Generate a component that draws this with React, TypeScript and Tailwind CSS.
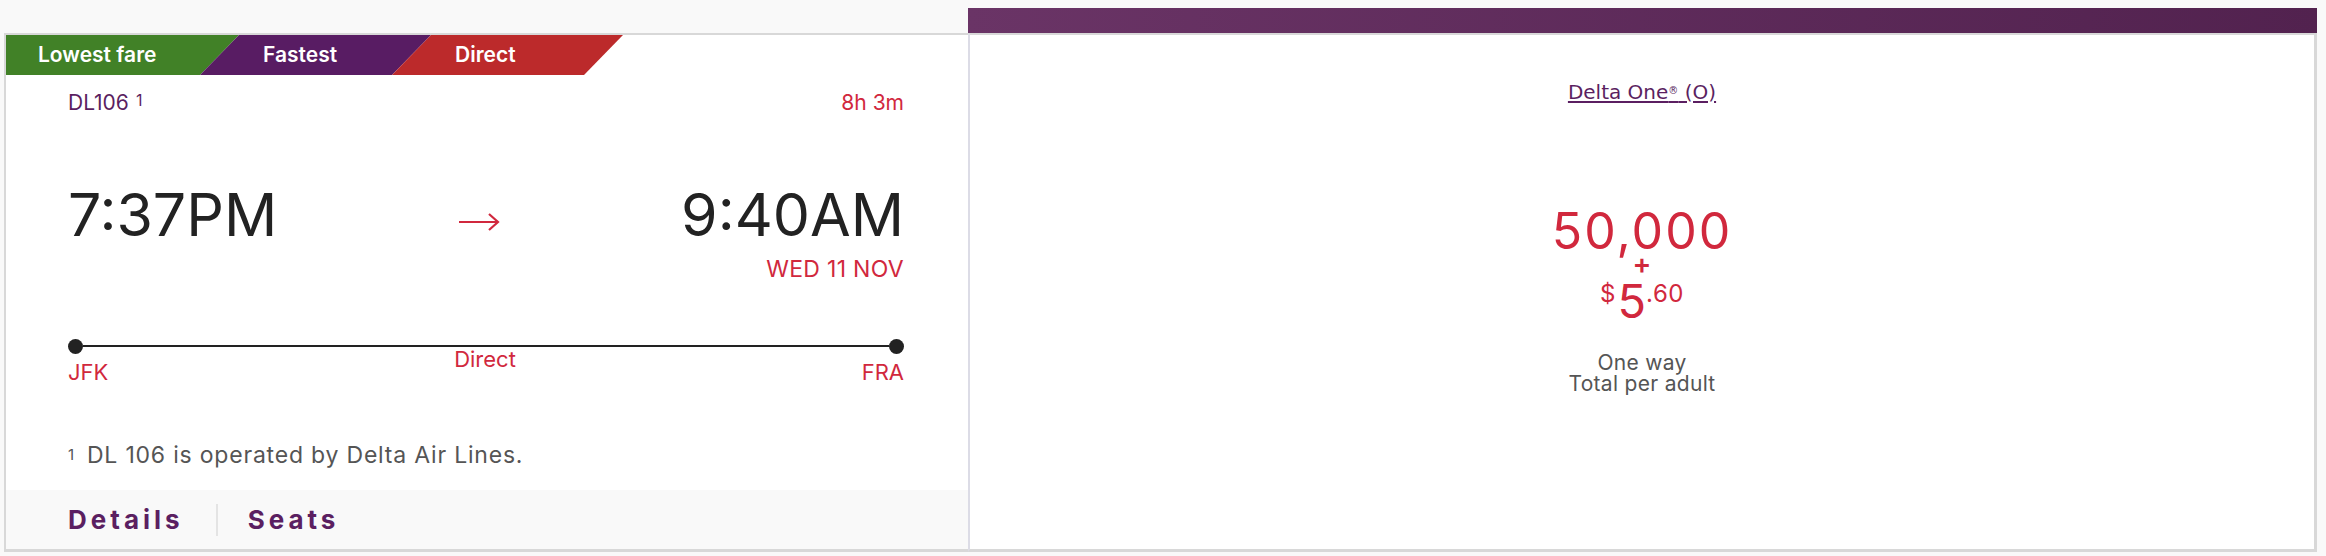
const Tag = ({ label, bg, first }: { label: string; bg: string; first?: boolean }) => (
  <div
    className={
      first
        ? `h-full w-[233px] pl-[32px] flex items-center text-white font-semibold text-[21px] ${bg} [clip-path:polygon(0_0,100%_0,calc(100%_-_39px)_100%,0_100%)]`
        : `h-full w-[231px] -ml-[39px] pl-[63px] flex items-center text-white font-semibold text-[21px] ${bg} [clip-path:polygon(39px_0,100%_0,calc(100%_-_39px)_100%,0_100%)]`
    }
  >
    {label}
  </div>
);

const FlightCard = () => (
  <div className="h-[519px] bg-white border-t-2 border-l-2 border-b-[3px] border-[#d8d8d8] flex flex-col">
    {/* badges */}
    <div className="flex h-[40px]">
      <Tag label="Lowest fare" bg="bg-[#418127]" first />
      <Tag label="Fastest" bg="bg-[#581c63]" />
      <Tag label="Direct" bg="bg-[#bc2a2b]" />
    </div>

    <div className="pl-[62px] pr-[64px] flex flex-col">
      <div className="mt-[15px] flex justify-between text-[21px] leading-[1.2]">
        <span className="text-[#5b1f61]">
          DL106<sup className="ml-[7px] text-[16px] relative -top-[4px]">1</sup>
        </span>
        <span className="text-[#d1283d]">8h 3m</span>
      </div>

      <div className="mt-[65px] flex justify-between items-start text-[59px] leading-[1.2] text-[#222]">
        <span>7:37PM</span>
        <svg className="mt-[32px]" width="42" height="20" viewBox="0 0 42 20" fill="none">
          <path d="M1 10H40M31 2L40 10L31 18" stroke="#d1283d" strokeWidth="2.2" />
        </svg>
        <span>9:40AM</span>
      </div>
      <div className="mt-[5px] text-right text-[23px] leading-[1.2] tracking-[0.3px] text-[#d1283d]">WED 11 NOV</div>

      {/* route line */}
      <div className="mt-[55px] flex items-center h-[15px]">
        <div className="w-[15px] h-[15px] rounded-full bg-[#222]" />
        <div className="flex-1 h-[2px] bg-[#222]" />
        <div className="w-[15px] h-[15px] rounded-full bg-[#222]" />
      </div>
      <div className="-mt-[8px] flex justify-between items-start text-[22px] leading-[1.2] text-[#d1283d]">
        <span className="mt-[13px]">JFK</span>
        <span>Direct</span>
        <span className="mt-[13px]">FRA</span>
      </div>

      <div className="mt-[57px] text-[23px] leading-[1.2] tracking-[0.8px] text-[#555]">
        <sup className="text-[15px] mr-[12px] relative -top-[3px]">1</sup>
        DL 106 is operated by Delta Air Lines.
      </div>
    </div>

    <div className="mt-auto h-[59px] bg-[#f9f9f9] pl-[62px] flex items-center text-[26px] font-bold tracking-[4px] text-[#5b1f61]">
      <span>Details</span>
      <div className="ml-[32px] mr-[30px] w-[2px] h-[32px] bg-[#e4e4e4]" />
      <span>Seats</span>
    </div>
  </div>
);

const FareCard = () => (
  <div className="h-[519px] bg-white border-t-2 border-l-2 border-l-[#dcdce6] border-r-[3px] border-b-[3px] border-[#d8d8d8] flex flex-col items-center">
    <a
      href="#"
      className="mt-[45px] text-[20px] leading-[1.2] text-[#5b1f61] underline underline-offset-2 font-['DejaVu_Sans',sans-serif]"
    >
      Delta One<sup className="text-[10px]">®</sup> (O)
    </a>
    <div className="mt-[105px] text-[50px] leading-[44px] tracking-[2px] text-[#d1283d]">50,000</div>
    <div className="mt-[3px] text-[28px] leading-[16px] font-semibold text-[#d1283d]">+</div>
    <div className="mt-[9px] flex items-start text-[#d1283d]">
      <span className="text-[24px] leading-[22px] mt-[2px] mr-[2px]">$</span>
      <span className="text-[47px] leading-[40px]">5</span>
      <span className="text-[24px] leading-[22px] mt-[2px] tracking-[0.5px]">.60</span>
    </div>
    <div className="mt-[31px] text-center text-[21px] leading-[21px] text-[#555] tracking-[0.3px]">
      <div>One way</div>
      <div>Total per adult</div>
    </div>
  </div>
);

export default function App() {
  return (
    <div className="w-full h-[556px] bg-[#f9f9f9] pt-[8px] pl-[4px] font-['Inter',sans-serif]">
      <div className="flex">
        <div className="w-[964px] flex flex-col">
          <div className="h-[25px]" />
          <FlightCard />
        </div>
        <div className="w-[1349px] flex flex-col">
          <div className="h-[25px] bg-linear-to-r from-[#6a3466] to-[#52224f]" />
          <FareCard />
        </div>
      </div>
    </div>
  );
}
